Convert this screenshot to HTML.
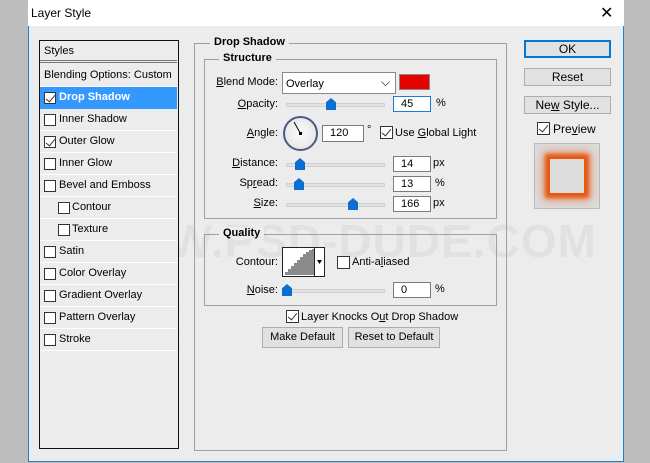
<!DOCTYPE html>
<html><head><style>
*{box-sizing:border-box;margin:0;padding:0}
body{width:650px;height:463px;background:#bdbdbd;font-family:"Liberation Sans",sans-serif;font-size:11px;color:#000;position:relative;overflow:hidden}
.a{position:absolute}
#dlg{left:28px;top:0;width:596px;height:462px;background:#ececec;border:1px solid #1883d7;border-top:none}
#title{left:28px;top:0;width:596px;height:26px;background:#fff}
.fs{border:1px solid #a0a0a0}
.lg{background:#ececec;font-weight:bold;padding:0 4px}
.row{left:40px;width:137px;height:22px;border-bottom:1px solid #fff;padding-left:19px;line-height:21px}
.cb{position:absolute;width:12px;height:12px;border:1px solid #333;background:#fff}
.row .cb{left:4px;top:5px}
.inp{background:#fff;border:1px solid #7a7a7a;height:16px;line-height:14px;padding-left:7px}
.trk{height:4px;background:#e2e2e2;border:1px solid #d0d0d0}
.th{width:10px;height:12px;background:#0a6fd0;clip-path:polygon(50% 0,100% 35%,100% 100%,0 100%,0 35%)}
.btn{background:#e1e1e1;border:1px solid #adadad;text-align:center;line-height:16px}
.lbl{text-align:right;width:80px}
.chk::after{content:"";position:absolute;left:3px;top:0px;width:4px;height:8px;border:solid #333;border-width:0 1.3px 1.3px 0;transform:rotate(40deg)}
</style></head><body>
<div class="a" id="dlg"></div>
<div class="a" id="title"></div>
<div class="a" style="left:31px;top:6px;font-size:12px">Layer Style</div>
<div class="a" style="left:600px;top:3px;font-size:16px">✕</div>

<div class="a" style="left:80px;top:214px;font-size:46px;font-weight:bold;color:#000;opacity:.04;letter-spacing:1px">WWW.PSD-DUDE.COM</div>

<div class="a" style="left:39px;top:40px;width:140px;height:409px;border:1px solid #111;background:#ececec"></div>
<div class="a" style="left:40px;top:41px;width:137px;height:22px;border-bottom:3px double #777;padding-left:4px;line-height:20px">Styles</div>
<div class="a row" style="top:65px;padding-left:4px">Blending Options: Custom</div>
<div class="a row" style="top:87px;background:#3399ff;color:#fff;font-weight:bold;border-color:#3399ff"><span class="cb chk"></span>Drop Shadow</div>
<div class="a row" style="top:109px"><span class="cb"></span>Inner Shadow</div>
<div class="a row" style="top:131px"><span class="cb chk"></span>Outer Glow</div>
<div class="a row" style="top:153px"><span class="cb"></span>Inner Glow</div>
<div class="a row" style="top:175px"><span class="cb"></span>Bevel and Emboss</div>
<div class="a row" style="top:197px;padding-left:32px"><span class="cb" style="left:18px"></span>Contour</div>
<div class="a row" style="top:219px;padding-left:32px"><span class="cb" style="left:18px"></span>Texture</div>
<div class="a row" style="top:241px"><span class="cb"></span>Satin</div>
<div class="a row" style="top:263px"><span class="cb"></span>Color Overlay</div>
<div class="a row" style="top:285px"><span class="cb"></span>Gradient Overlay</div>
<div class="a row" style="top:307px"><span class="cb"></span>Pattern Overlay</div>
<div class="a row" style="top:329px"><span class="cb"></span>Stroke</div>

<div class="a fs" style="left:194px;top:43px;width:313px;height:408px"></div>
<div class="a lg" style="left:210px;top:36px">Drop Shadow</div>
<div class="a fs" style="left:204px;top:59px;width:293px;height:160px"></div>
<div class="a lg" style="left:219px;top:52px">Structure</div>
<div class="a fs" style="left:204px;top:234px;width:293px;height:72px"></div>
<div class="a lg" style="left:219px;top:227px">Quality</div>

<div class="a lbl" style="left:198px;top:76px"><u>B</u>lend Mode:</div>
<div class="a" style="left:282px;top:72px;width:114px;height:22px;background:#fff;border:1px solid #888;padding:5px 3px">Overlay<span style="position:absolute;right:5px;top:2px;font-size:12px">⌵</span></div>
<div class="a" style="left:399px;top:74px;width:31px;height:16px;background:#e60000;border:1px solid #888"></div>

<div class="a lbl" style="left:198px;top:98px"><u>O</u>pacity:</div>
<div class="a trk" style="left:286px;top:103px;width:99px"></div>
<div class="a th" style="left:326px;top:98px"></div>
<div class="a inp" style="left:393px;top:96px;width:38px;border-color:#1a7ad8">45</div>
<div class="a" style="left:436px;top:97px">%</div>

<div class="a lbl" style="left:198px;top:127px"><u>A</u>ngle:</div>
<div class="a" style="left:283px;top:116px;width:35px;height:35px;border-radius:50%;border:2px solid #4a5a80;background:radial-gradient(#fafafa,#e2e2e2)"></div>
<svg class="a" style="left:283px;top:116px" width="35" height="35"><line x1="17.5" y1="17.5" x2="11" y2="6" stroke="#000" stroke-width="1"/><rect x="16" y="16" width="3" height="3"/></svg>
<div class="a inp" style="left:322px;top:125px;width:42px;height:17px;line-height:15px">120</div>
<div class="a" style="left:367px;top:124px">°</div>
<div class="a cb chk" style="left:380px;top:126px;width:13px;height:13px"></div>
<div class="a" style="left:395px;top:127px">Use <u>G</u>lobal Light</div>

<div class="a lbl" style="left:198px;top:157px"><u>D</u>istance:</div>
<div class="a trk" style="left:286px;top:163px;width:99px"></div>
<div class="a th" style="left:295px;top:158px"></div>
<div class="a inp" style="left:393px;top:156px;width:38px">14</div>
<div class="a" style="left:433px;top:157px">px</div>

<div class="a lbl" style="left:198px;top:177px">Sp<u>r</u>ead:</div>
<div class="a trk" style="left:286px;top:183px;width:99px"></div>
<div class="a th" style="left:294px;top:178px"></div>
<div class="a inp" style="left:393px;top:176px;width:38px">13</div>
<div class="a" style="left:435px;top:177px">%</div>

<div class="a lbl" style="left:198px;top:197px"><u>S</u>ize:</div>
<div class="a trk" style="left:286px;top:203px;width:99px"></div>
<div class="a th" style="left:348px;top:198px"></div>
<div class="a inp" style="left:393px;top:196px;width:38px">166</div>
<div class="a" style="left:433px;top:197px">px</div>

<div class="a lbl" style="left:198px;top:256px">Contour:</div>
<div class="a" style="left:282px;top:247px;width:43px;height:30px;background:#fff;border:1px solid #222"></div>
<svg class="a" style="left:283px;top:248px" width="41" height="28"><path d="M2 27 V24 H5 V21 H8 V18 H11 V15 H14 V12 H17 V9 H20 V6 H23 V4 H26 V2 H29 V1 H31 V27Z" fill="#8a8a8a"/><line x1="31.5" y1="0" x2="31.5" y2="28" stroke="#222"/><path d="M34 12 L39 12 36.5 16Z" fill="#000"/></svg>
<div class="a cb" style="left:337px;top:256px;width:13px;height:13px"></div>
<div class="a" style="left:352px;top:256px">Anti-a<u>l</u>iased</div>

<div class="a lbl" style="left:198px;top:284px"><u>N</u>oise:</div>
<div class="a trk" style="left:286px;top:289px;width:99px"></div>
<div class="a th" style="left:282px;top:284px"></div>
<div class="a inp" style="left:393px;top:282px;width:38px">0</div>
<div class="a" style="left:435px;top:283px">%</div>

<div class="a cb chk" style="left:286px;top:310px;width:13px;height:13px"></div>
<div class="a" style="left:301px;top:311px">Layer Knocks O<u>u</u>t Drop Shadow</div>
<div class="a btn" style="left:262px;top:327px;width:81px;height:21px;line-height:19px">Make Default</div>
<div class="a btn" style="left:348px;top:327px;width:92px;height:21px;line-height:19px">Reset to Default</div>

<div class="a btn" style="left:524px;top:40px;width:87px;height:18px;border:2px solid #0078d7;font-size:12px;line-height:14px">OK</div>
<div class="a btn" style="left:524px;top:68px;width:87px;height:18px;font-size:12px">Reset</div>
<div class="a btn" style="left:524px;top:96px;width:87px;height:18px;font-size:12px">Ne<u>w</u> Style...</div>
<div class="a cb chk" style="left:537px;top:122px;width:13px;height:13px"></div>
<div class="a" style="left:553px;top:122px;font-size:12px">Pre<u>v</u>iew</div>
<div class="a" style="left:534px;top:143px;width:66px;height:66px;background:#dcdcdc;border:1px solid #bbb"></div>
<div class="a" style="left:550px;top:159px;width:34px;height:34px;background:#dcdcdc;box-shadow:0 0 4px 5px #e85510,0 0 10px 7px rgba(236,90,16,.45)"></div>
</body></html>
